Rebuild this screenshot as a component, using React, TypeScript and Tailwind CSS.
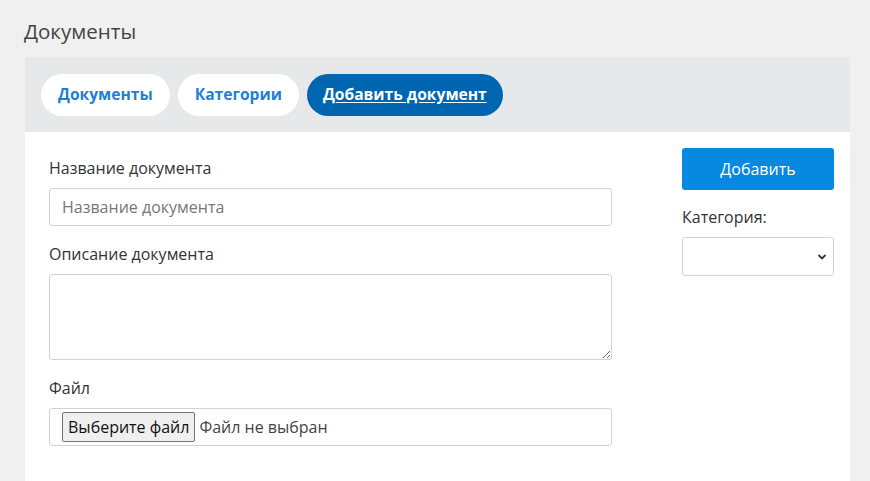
import React from "react";

const App: React.FC = () => {
  return (
    <div className="min-h-[481px] overflow-hidden bg-[#f0f0f0] font-['Open_Sans',sans-serif] text-[#333]">
      <div className="px-[25px] pt-[17px]">
        <h1 className="-ml-px text-[20.5px] leading-[28px] text-[#444]">Документы</h1>
        <div className="mt-[12px] w-[825px] bg-white">
          <nav className="flex h-[75px] items-center gap-2 bg-[#e7e8e9] px-4">
            <a href="#" className="flex h-[42px] items-center rounded-full bg-white px-[17px] text-[15.6px] font-bold text-[#1f7fd3]">
              Документы
            </a>
            <a href="#" className="flex h-[42px] items-center rounded-full bg-white px-[17px] text-[15.6px] font-bold text-[#1f7fd3]">
              Категории
            </a>
            <a href="#" className="flex h-[42px] items-center rounded-full bg-[#0066b2] px-[16px] text-[15.6px] font-bold text-white underline underline-offset-2">
              Добавить документ
            </a>
          </nav>
          <div className="flex justify-between pb-12 pl-6 pr-4 pt-4">
            <form className="flex w-[563px] flex-col">
              <label className="mt-[10px] text-[16px] leading-[20px] text-[#333]">Название документа</label>
              <input
                type="text"
                placeholder="Название документа"
                className="mt-[10px] h-[38px] rounded-[3px] border border-[#d3d3d3] px-3 text-[16px] outline-none placeholder:text-[#777]"
              />
              <label className="mt-[18px] text-[16px] leading-[20px] text-[#333]">Описание документа</label>
              <textarea className="mt-[10px] h-[86px] rounded-[3px] border border-[#d3d3d3] px-3 py-1 text-[16px] outline-none" />
              <label className="mt-[18px] text-[16px] leading-[20px] text-[#333]">Файл</label>
              <div className="mt-[10px] flex h-[38px] items-center rounded-[3px] border border-[#d3d3d3] px-3 text-[16px] text-[#444]">
                <span className="flex h-[30px] items-center rounded-[2px] border border-[#767676] bg-[#efefef] px-[5px] text-[#111]">
                  Выберите файл
                </span>
                <span className="ml-1">Файл не выбран</span>
              </div>
            </form>
            <div className="flex w-[152px] flex-col">
              <button type="button" className="h-[42px] rounded-[3px] bg-[#0788e1] text-[16px] text-white">
                Добавить
              </button>
              <label className="mt-[17px] text-[16px] leading-[20px] text-[#333]">Категория:</label>
              <div className="relative mt-[10px] h-[39px] rounded-[3px] border border-[#d3d3d3] bg-white">
                <svg className="absolute right-[6px] top-[15px]" width="10" height="8" viewBox="0 0 10 8">
                  <path d="M1.5 2 L5 5.5 L8.5 2" fill="none" stroke="#333" strokeWidth="1.8" />
                </svg>
              </div>
            </div>
          </div>
        </div>
      </div>
    </div>
  );
};

export default App;
